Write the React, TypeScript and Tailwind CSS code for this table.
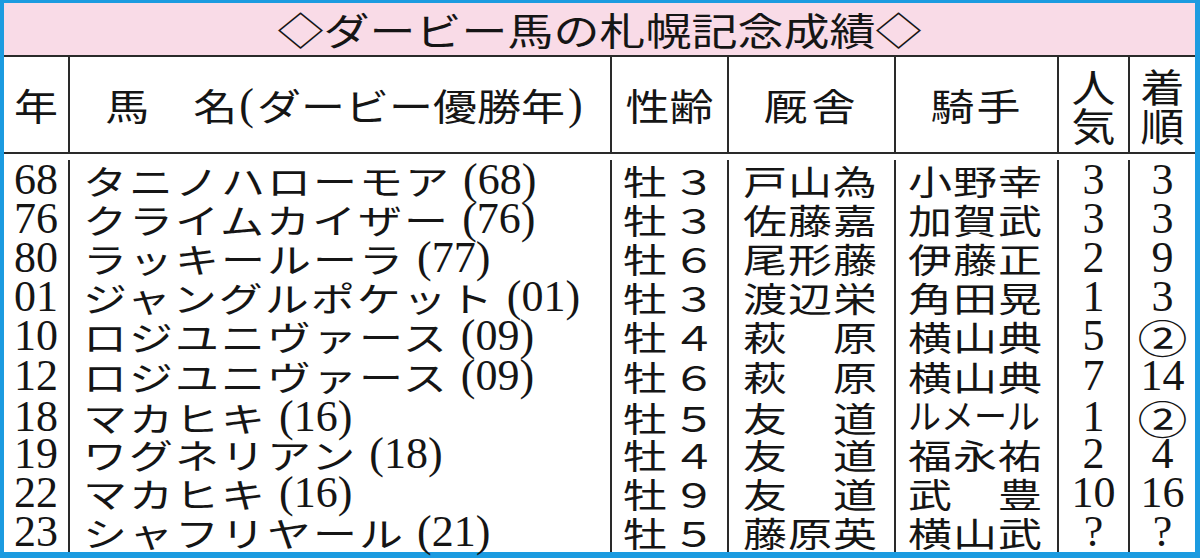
import React from "react";

type Row = {
  year: string;
  name: string;
  derby: string;
  age: string;
  trainer: string;
  jockey: string;
  pop: string;
  finish: string;
};

const rows: Row[] = [
  { year: "68", name: "タニノハローモア", derby: "68", age: "３", trainer: "戸山為", jockey: "小野幸", pop: "3", finish: "3" },
  { year: "76", name: "クライムカイザー", derby: "76", age: "３", trainer: "佐藤嘉", jockey: "加賀武", pop: "3", finish: "3" },
  { year: "80", name: "ラッキールーラ", derby: "77", age: "６", trainer: "尾形藤", jockey: "伊藤正", pop: "2", finish: "9" },
  { year: "01", name: "ジャングルポケット", derby: "01", age: "３", trainer: "渡辺栄", jockey: "角田晃", pop: "1", finish: "3" },
  { year: "10", name: "ロジユニヴァース", derby: "09", age: "４", trainer: "萩　原", jockey: "横山典", pop: "5", finish: "②" },
  { year: "12", name: "ロジユニヴァース", derby: "09", age: "６", trainer: "萩　原", jockey: "横山典", pop: "7", finish: "14" },
  { year: "18", name: "マカヒキ", derby: "16", age: "５", trainer: "友　道", jockey: "ルメール", pop: "1", finish: "②" },
  { year: "19", name: "ワグネリアン", derby: "18", age: "４", trainer: "友　道", jockey: "福永祐", pop: "2", finish: "4" },
  { year: "22", name: "マカヒキ", derby: "16", age: "９", trainer: "友　道", jockey: "武　豊", pop: "10", finish: "16" },
  { year: "23", name: "シャフリヤール", derby: "21", age: "５", trainer: "藤原英", jockey: "横山武", pop: "?", finish: "?" },
];

const grid = "grid grid-cols-[66px_542px_117px_167px_163px_71px_65px]";
const line = "border-r-2 border-[#2a2a2a]";
const serif = "font-['Liberation_Serif','Noto_Sans_CJK_JP',serif] text-[44px] leading-[38px]";

// flattened Japanese type, as in the newspaper table
function J({ children, className = "" }: { children: React.ReactNode; className?: string }) {
  return (
    <span className={`inline-block font-['Noto_Sans_CJK_JP',sans-serif] text-[44px] leading-[38px] scale-y-[0.78] ${className}`}>
      {children}
    </span>
  );
}

function Num({ children }: { children: React.ReactNode }) {
  return <span className={serif}>{children}</span>;
}

function Header() {
  return (
    <div className={`${grid} h-[97px] border-b-2 border-[#2a2a2a]`}>
      <div className={`${line} flex items-center justify-center`}>
        <J className="scale-y-[0.85]">年</J>
      </div>
      <div className={`${line} flex items-center justify-center pl-[8px]`}>
        <J className="scale-y-[0.85]">馬　名</J>
        <span className={`${serif} ml-[2px] mr-[3px]`}>(</span>
        <J className="scale-y-[0.85]">ダービー優勝年</J>
        <span className={`${serif} ml-[3px]`}>)</span>
      </div>
      <div className={`${line} flex items-center justify-center`}>
        <J className="scale-y-[0.85]">性齢</J>
      </div>
      <div className={`${line} flex items-center justify-center`}>
        <J className="scale-y-[0.85] tracking-[4px]">厩舎</J>
      </div>
      <div className={`${line} flex items-center justify-center`}>
        <J className="scale-y-[0.85] tracking-[2px]">騎手</J>
      </div>
      <div className={`${line} flex flex-col items-center justify-center`}>
        <J className="text-[42px] scale-y-[0.88] leading-[39px]">人</J>
        <J className="text-[42px] scale-y-[0.88] leading-[39px]">気</J>
      </div>
      <div className="flex flex-col items-center justify-center">
        <J className="text-[42px] scale-y-[0.88] leading-[39px]">着</J>
        <J className="text-[42px] scale-y-[0.88] leading-[39px]">順</J>
      </div>
    </div>
  );
}

function DataRow({ row, first }: { row: Row; first: boolean }) {
  const h = first ? "h-[45.2px] pt-[6px]" : "h-[39.2px]";
  return (
    <div className={`${grid} ${h} text-[#151515]`}>
      <div className={`${line} flex items-center justify-center`}>
        <Num>{row.year}</Num>
      </div>
      <div className={`${line} flex items-center pl-[13px] whitespace-nowrap`}>
        <J className="tracking-[2px]">{row.name}</J>
        <span className={`${serif} ml-[12px]`}>({row.derby})</span>
      </div>
      <div className={`${line} flex items-center pl-[11px]`}>
        <J>牡</J>
        <J className="ml-[5px]">{row.age}</J>
      </div>
      <div className={`${line} flex items-center pl-[14px] whitespace-nowrap`}>
        <J className="tracking-[1px]">{row.trainer}</J>
      </div>
      <div className={`${line} flex items-center pl-[12px] whitespace-nowrap`}>
        {row.jockey.length > 3 ? (
          <span className="inline-block origin-left scale-x-[0.75]">
            <J>{row.jockey}</J>
          </span>
        ) : (
          <J className="tracking-[1px]">{row.jockey}</J>
        )}
      </div>
      <div className={`${line} flex items-center justify-center`}>
        <Num>{row.pop}</Num>
      </div>
      <div className="flex items-center justify-center">
        {row.finish === "②" ? (
          <J className="text-[50px] leading-[36px] scale-y-[0.74]">②</J>
        ) : (
          <Num>{row.finish}</Num>
        )}
      </div>
    </div>
  );
}

export default function App() {
  return (
    <div className="w-[1200px] h-[558px] bg-[#1c9be0] pt-[3px] pl-[4px] pr-[5px] pb-[6px] text-[#151515]">
      <div className="bg-white h-full flex flex-col">
        <div className="h-[54px] shrink-0 bg-[#f9dbe7] border-b-2 border-[#2a2a2a] flex items-center justify-center">
          <J className="text-[46px] scale-y-[0.82]">◇ダービー馬の札幌記念成績◇</J>
        </div>
        <Header />
        {rows.map((r, i) => (
          <DataRow key={r.year} row={r} first={i === 0} />
        ))}
      </div>
    </div>
  );
}
